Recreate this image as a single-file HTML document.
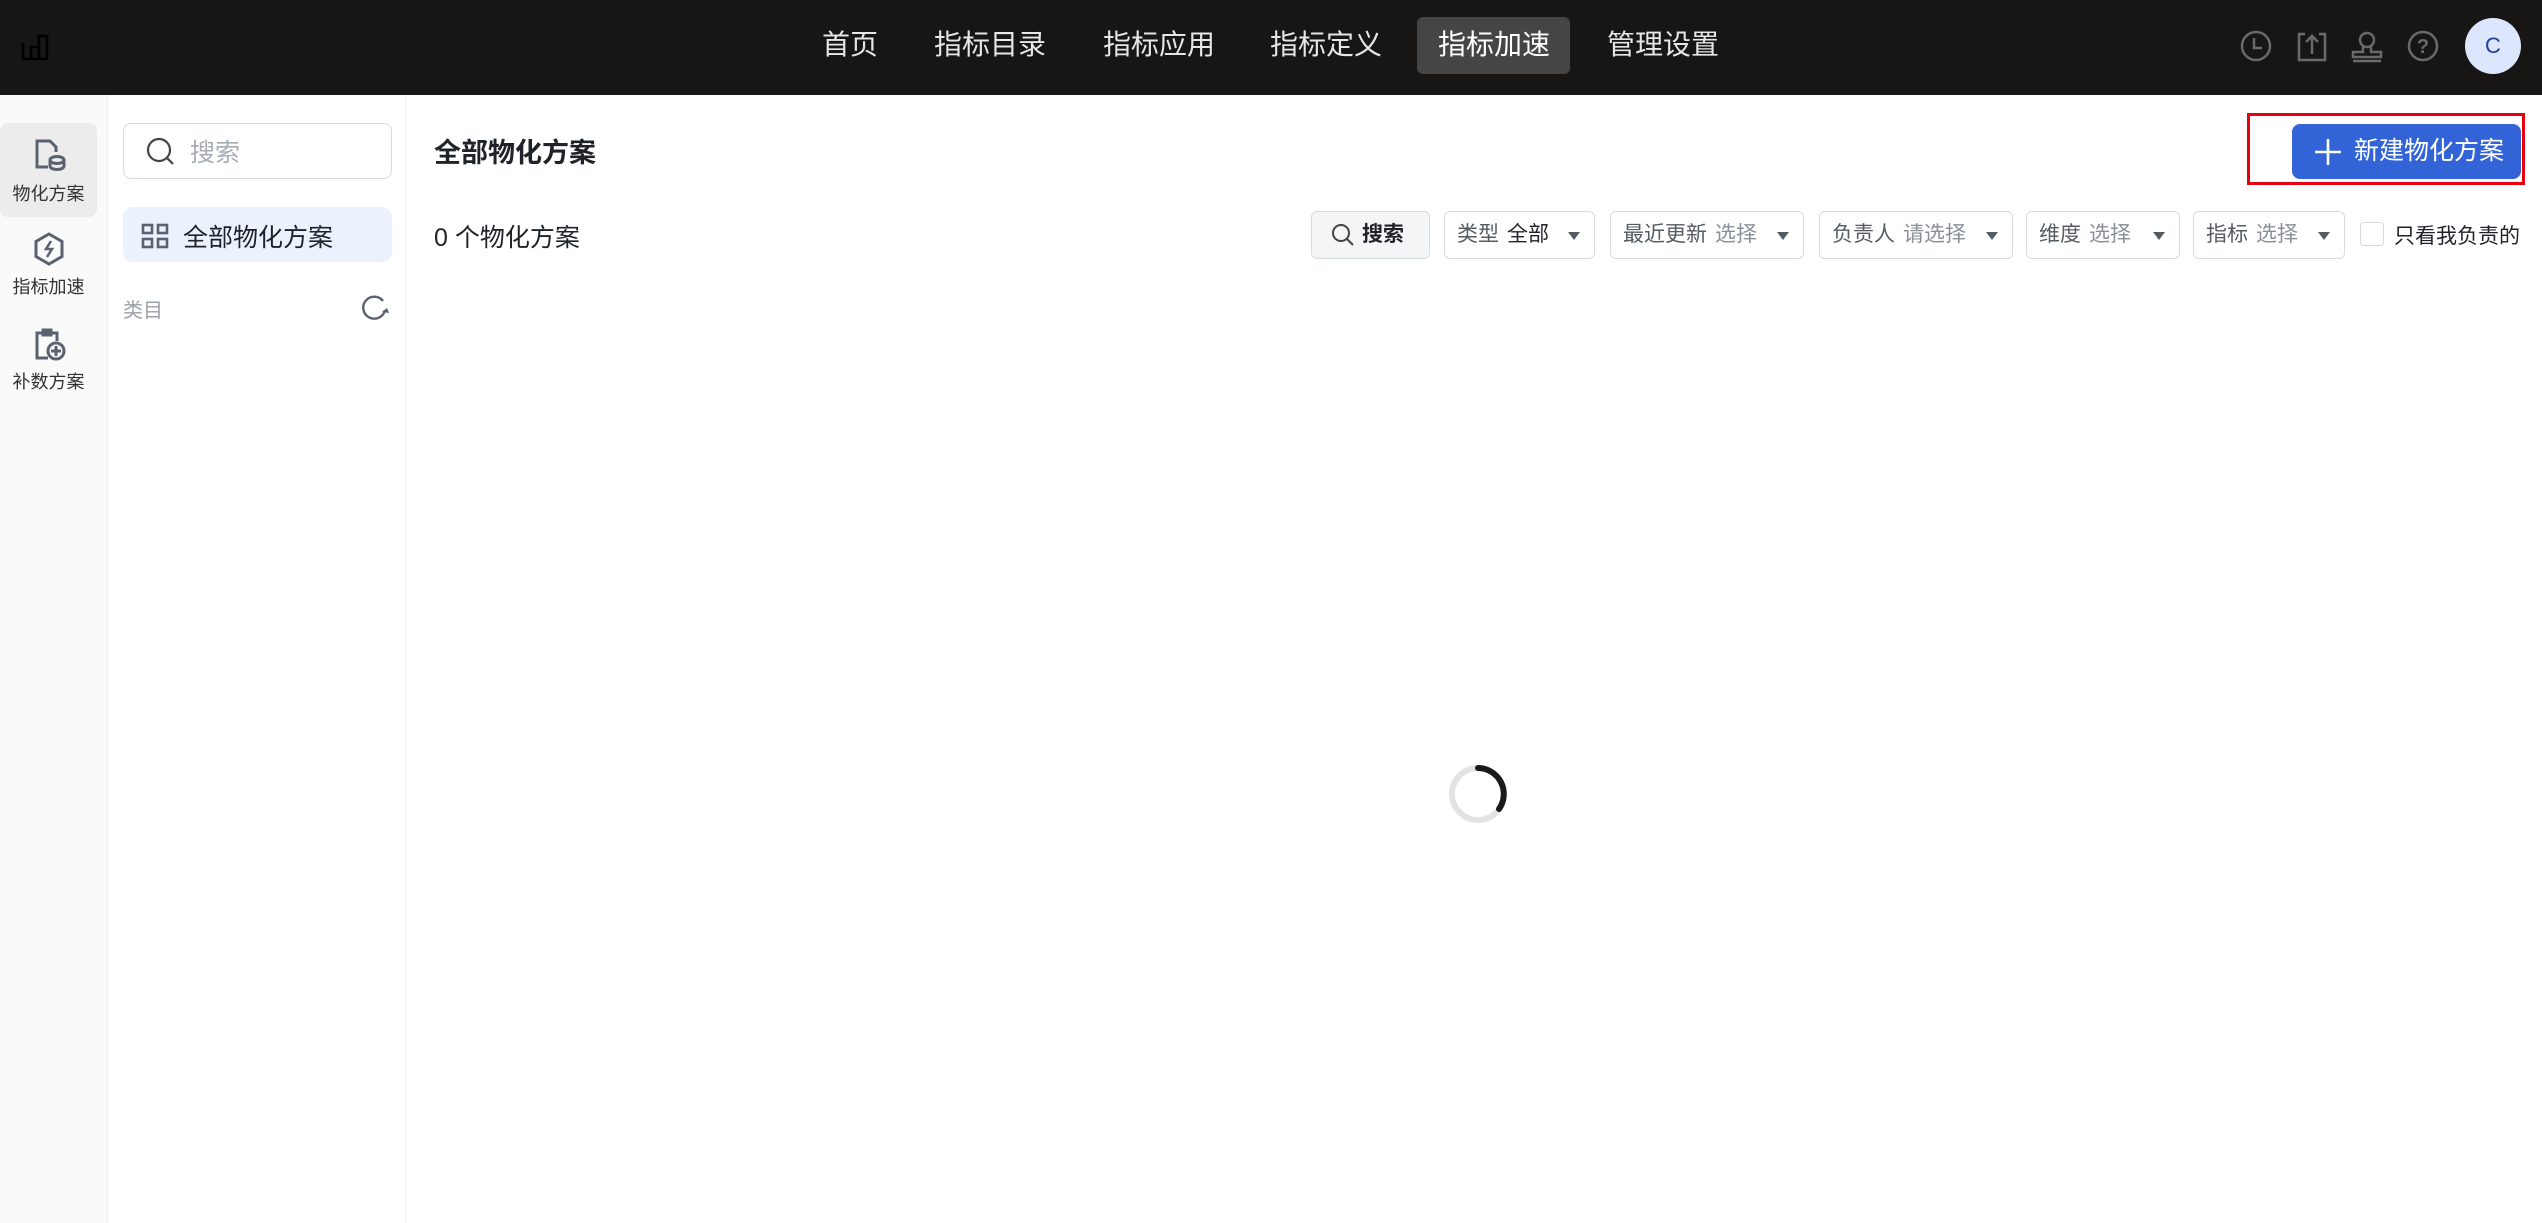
<!DOCTYPE html>
<html><head><meta charset="utf-8"><style>
*{margin:0;padding:0;box-sizing:border-box}
body{width:2542px;height:1223px;overflow:hidden;background:#fff;font-family:"Liberation Sans","Noto Sans CJK SC",sans-serif;position:relative;color:#1f2329}
.a{position:absolute}
.hdr{left:0;top:0;width:2542px;height:95px;background:#171615}
.nav{color:#e6e6e6;font-size:28px;top:27px;line-height:36px}
.rail{left:0;top:95px;width:108px;height:1128px;background:#fafafa;border-right:1px solid #eceef1}
.panel{left:108px;top:95px;width:298px;height:1128px;border-right:1px solid #eceef1}
.rl{font-size:18px;color:#333;width:97px;text-align:center}
.flt{top:211px;height:48px;border:1px solid #d7dbe0;border-radius:6px;font-size:21px;line-height:46px;padding-left:12px;color:#555b63}
.flt .v{color:#8a9099;margin-left:8px}
.flt .ar{position:absolute;right:14px;top:20px;width:0;height:0;border-left:6px solid transparent;border-right:6px solid transparent;border-top:8px solid #555b63}
</style></head><body>
<div class="a hdr"></div>
<svg class="a" style="left:20px;top:33px" width="30" height="28" viewBox="0 0 30 28"><path d="M3 10v16h24V3h-8v23M11 26V14h8" fill="none" stroke="#000" stroke-width="2.6"/></svg>
<div class="a nav" style="left:822px">首页</div>
<div class="a nav" style="left:934px">指标目录</div>
<div class="a nav" style="left:1103px">指标应用</div>
<div class="a nav" style="left:1270px">指标定义</div>
<div class="a" style="left:1417px;top:17px;width:153px;height:57px;background:#454545;border-radius:6px"></div>
<div class="a nav" style="left:1438px;color:#fff">指标加速</div>
<div class="a nav" style="left:1607px">管理设置</div>
<svg class="a" style="left:2236px;top:28px" width="290" height="40" viewBox="0 0 290 40">
<g fill="none" stroke="#6a6a6a" stroke-width="2.5">
<circle cx="20" cy="18" r="14"/><path d="M18 10v10h8"/>
<path d="M69 6h-6v26h26V6h-6M76 26V8M70 14l6-6 6 6"/>
<circle cx="131" cy="12" r="7"/><path d="M127 18v6h-10v5h28v-5h-10v-6M117 33h28"/>
<circle cx="187" cy="18" r="14"/>
</g>
<text x="187" y="25" font-size="20" fill="#6a6a6a" text-anchor="middle" font-family="Liberation Sans" font-weight="bold">?</text>
</svg>
<div class="a" style="left:2465px;top:18px;width:56px;height:56px;border-radius:50%;background:#dce6fd;color:#1d3fa0;font-size:22px;text-align:center;line-height:56px">C</div>

<div class="a rail"></div>
<div class="a" style="left:0;top:123px;width:97px;height:94px;background:#ececec;border-radius:8px"></div>
<svg class="a" style="left:34px;top:138px" width="32" height="34" viewBox="0 0 32 34"><g fill="none" stroke="#5a6270" stroke-width="3"><path d="M14 29H3V3h13l6 6v5"/><ellipse cx="23" cy="22" rx="7" ry="3.5"/><path d="M16 22v6c0 2 3 3.5 7 3.5s7-1.5 7-3.5v-6"/></g></svg>
<div class="a rl" style="top:180px">物化方案</div>
<svg class="a" style="left:33px;top:232px" width="32" height="34" viewBox="0 0 32 34"><g fill="none" stroke="#5a6270" stroke-width="3"><path d="M16 2l13 7.5v15L16 32 3 24.5v-15z"/><path d="M18 9l-5 8h6l-5 8" stroke-width="2.5"/></g></svg>
<div class="a rl" style="top:273px">指标加速</div>
<svg class="a" style="left:34px;top:328px" width="32" height="34" viewBox="0 0 32 34"><g fill="none" stroke="#5a6270" stroke-width="3"><path d="M14 30H3V5h20v8M9 2h8v5H9z"/><circle cx="22" cy="23" r="8"/><path d="M22 18v10M17 23h10"/></g></svg>
<div class="a rl" style="top:368px">补数方案</div>

<div class="a panel"></div>
<div class="a" style="left:123px;top:123px;width:269px;height:56px;border:1px solid #d7dbe0;border-radius:8px"></div>
<svg class="a" style="left:146px;top:137px" width="30" height="30" viewBox="0 0 30 30"><g fill="none" stroke="#444" stroke-width="2.2"><circle cx="13" cy="13" r="11"/><path d="M21 21l6 6"/></g></svg>
<div class="a" style="left:190px;top:133px;font-size:25px;color:#a6acb5">搜索</div>
<div class="a" style="left:123px;top:207px;width:269px;height:55px;background:#ebf1fd;border-radius:10px"></div>
<svg class="a" style="left:141px;top:223px" width="28" height="26" viewBox="0 0 28 26"><g fill="none" stroke="#5a6270" stroke-width="2.6"><rect x="2" y="2" width="9" height="8"/><rect x="17" y="2" width="9" height="8"/><rect x="2" y="16" width="9" height="8"/><rect x="17" y="16" width="9" height="8"/></g></svg>
<div class="a" style="left:183px;top:218px;font-size:25px;color:#1f2329">全部物化方案</div>
<div class="a" style="left:123px;top:294px;font-size:20px;color:#9aa0a8">类目</div>
<svg class="a" style="left:361px;top:295px" width="28" height="26" viewBox="0 0 28 26"><path d="M24 15a11 11 0 1 1-2-9" fill="none" stroke="#5a6270" stroke-width="2.4"/><path d="M21 17l5-4 2 5z" fill="#5a6270"/></svg>

<div class="a" style="left:434px;top:131px;font-size:27px;font-weight:bold;color:#1f2329">全部物化方案</div>
<div class="a" style="left:434px;top:218px;font-size:25px;color:#1f2329">0 个物化方案</div>

<div class="a" style="left:2247px;top:113px;width:278px;height:72px;border:3px solid #e60012"></div>
<div class="a" style="left:2292px;top:124px;width:229px;height:55px;background:#3264d8;border-radius:8px;color:#fff;font-size:25px;line-height:55px;padding-left:62px">新建物化方案</div>
<svg class="a" style="left:2314px;top:138px" width="28" height="28" viewBox="0 0 28 28"><path d="M14 1v26M1 14h26" stroke="#fff" stroke-width="2.6"/></svg>

<div class="a flt" style="left:1311px;width:119px;background:#f4f5f7;color:#1f2329;padding-left:50px;font-weight:bold">搜索</div>
<svg class="a" style="left:1331px;top:223px" width="24" height="24" viewBox="0 0 24 24"><g fill="none" stroke="#444" stroke-width="2"><circle cx="10" cy="10" r="8"/><path d="M16 16l6 6"/></g></svg>
<div class="a flt" style="left:1444px;width:151px">类型<span class="v" style="color:#1f2329">全部</span><i class="ar"></i></div>
<div class="a flt" style="left:1610px;width:194px">最近更新<span class="v">选择</span><i class="ar"></i></div>
<div class="a flt" style="left:1819px;width:194px">负责人<span class="v">请选择</span><i class="ar"></i></div>
<div class="a flt" style="left:2026px;width:154px">维度<span class="v">选择</span><i class="ar"></i></div>
<div class="a flt" style="left:2193px;width:152px">指标<span class="v">选择</span><i class="ar"></i></div>
<div class="a" style="left:2360px;top:222px;width:24px;height:24px;border:1px solid #d7dbe0;border-radius:4px"></div>
<div class="a" style="left:2394px;top:220px;font-size:21px;color:#1f2329">只看我负责的</div>

<svg class="a" style="left:1444px;top:760px" width="68" height="68" viewBox="0 0 68 68"><circle cx="34" cy="34" r="26" fill="none" stroke="#e3e3e3" stroke-width="6"/><path d="M34 8A26 26 0 0 1 55 49" fill="none" stroke="#1a1a1a" stroke-width="6" stroke-linecap="round"/></svg>
</body></html>
